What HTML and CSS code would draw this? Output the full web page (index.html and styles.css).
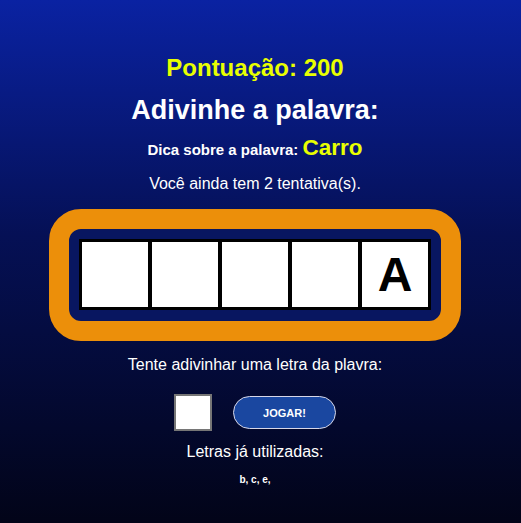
FILE: index.html
```html
<!DOCTYPE html>
<html lang="pt-BR">
<head>
<meta charset="utf-8">
<title>Adivinhe a palavra</title>
<link rel="stylesheet" href="styles.css">
</head>
<body>
<main class="game">
  <h2 class="score">Pontuação: 200</h2>
  <h1 class="title">Adivinhe a palavra:</h1>
  <p class="hint">Dica sobre a palavra: <span class="hint-word">Carro</span></p>
  <p class="tries">Você ainda tem 2 tentativa(s).</p>
  <div class="board">
    <div class="cells">
      <div class="cell"></div>
      <div class="cell"></div>
      <div class="cell"></div>
      <div class="cell"></div>
      <div class="cell">A</div>
    </div>
  </div>
  <p class="prompt">Tente adivinhar uma letra da plavra:</p>
  <div class="controls">
    <input class="letter" type="text" maxlength="1">
    <button class="play">JOGAR!</button>
  </div>
  <p class="used-label">Letras já utilizadas:</p>
  <p class="used">b, c, e,</p>
</main>
</body>
</html>
```
FILE: styles.css
```css
html, body {
  margin: 0;
  padding: 0;
}
body {
  min-height: 523px;
  background: linear-gradient(to bottom, #0a22a2 0%, #051055 45%, #020418 100%);
  font-family: "Liberation Sans", Arial, sans-serif;
  color: #fff;
}
.game {
  display: flex;
  flex-direction: column;
  align-items: center;
  padding-top: 54px;
  padding-right: 11px;
}
.score {
  margin: 0;
  font-size: 24px;
  line-height: 28px;
  color: #e8ff00;
  font-weight: bold;
}
.title {
  margin: 12px 0 0;
  font-size: 27px;
  line-height: 32px;
  font-weight: bold;
}
.hint {
  margin: 10px 0 0;
  font-size: 15px;
  font-weight: bold;
  line-height: 24px;
}
.hint-word {
  font-size: 22.5px;
  color: #e8ff00;
}
.tries {
  margin: 12px 0 0;
  font-size: 16px;
  line-height: 20px;
}
.board {
  margin-top: 15px;
  background: #081660;
  border: 20px solid #ec8f0a;
  border-radius: 32px;
  padding: 10px 10px 11px;
}
.cells {
  display: grid;
  grid-template-columns: repeat(5, 66px);
  gap: 4px;
  background: #000;
  border: 3px solid #000;
}
.cell {
  background: #fff;
  height: 65px;
  display: flex;
  align-items: center;
  justify-content: center;
  font-size: 48px;
  font-weight: bold;
  color: #000;
}
.prompt {
  margin: 14px 0 0;
  font-size: 16px;
  line-height: 20px;
}
.controls {
  margin-top: 19px;
  display: flex;
  align-items: center;
  gap: 21px;
}
.letter {
  box-sizing: border-box;
  width: 38px;
  height: 37px;
  border: 2px solid #767676;
  background: #fff;
  padding: 0;
  font-size: 16px;
  text-align: center;
}
.play {
  box-sizing: border-box;
  width: 103px;
  height: 33px;
  border-radius: 17px;
  border: 1px solid #d8d8e8;
  background: #1a47a0;
  color: #fff;
  font-family: "Liberation Sans", Arial, sans-serif;
  font-size: 11px;
  font-weight: bold;
}
.used-label {
  margin: 11px 0 0;
  font-size: 16px;
  line-height: 20px;
}
.used {
  margin: 12px 0 0;
  font-size: 10px;
  font-weight: bold;
}
```
